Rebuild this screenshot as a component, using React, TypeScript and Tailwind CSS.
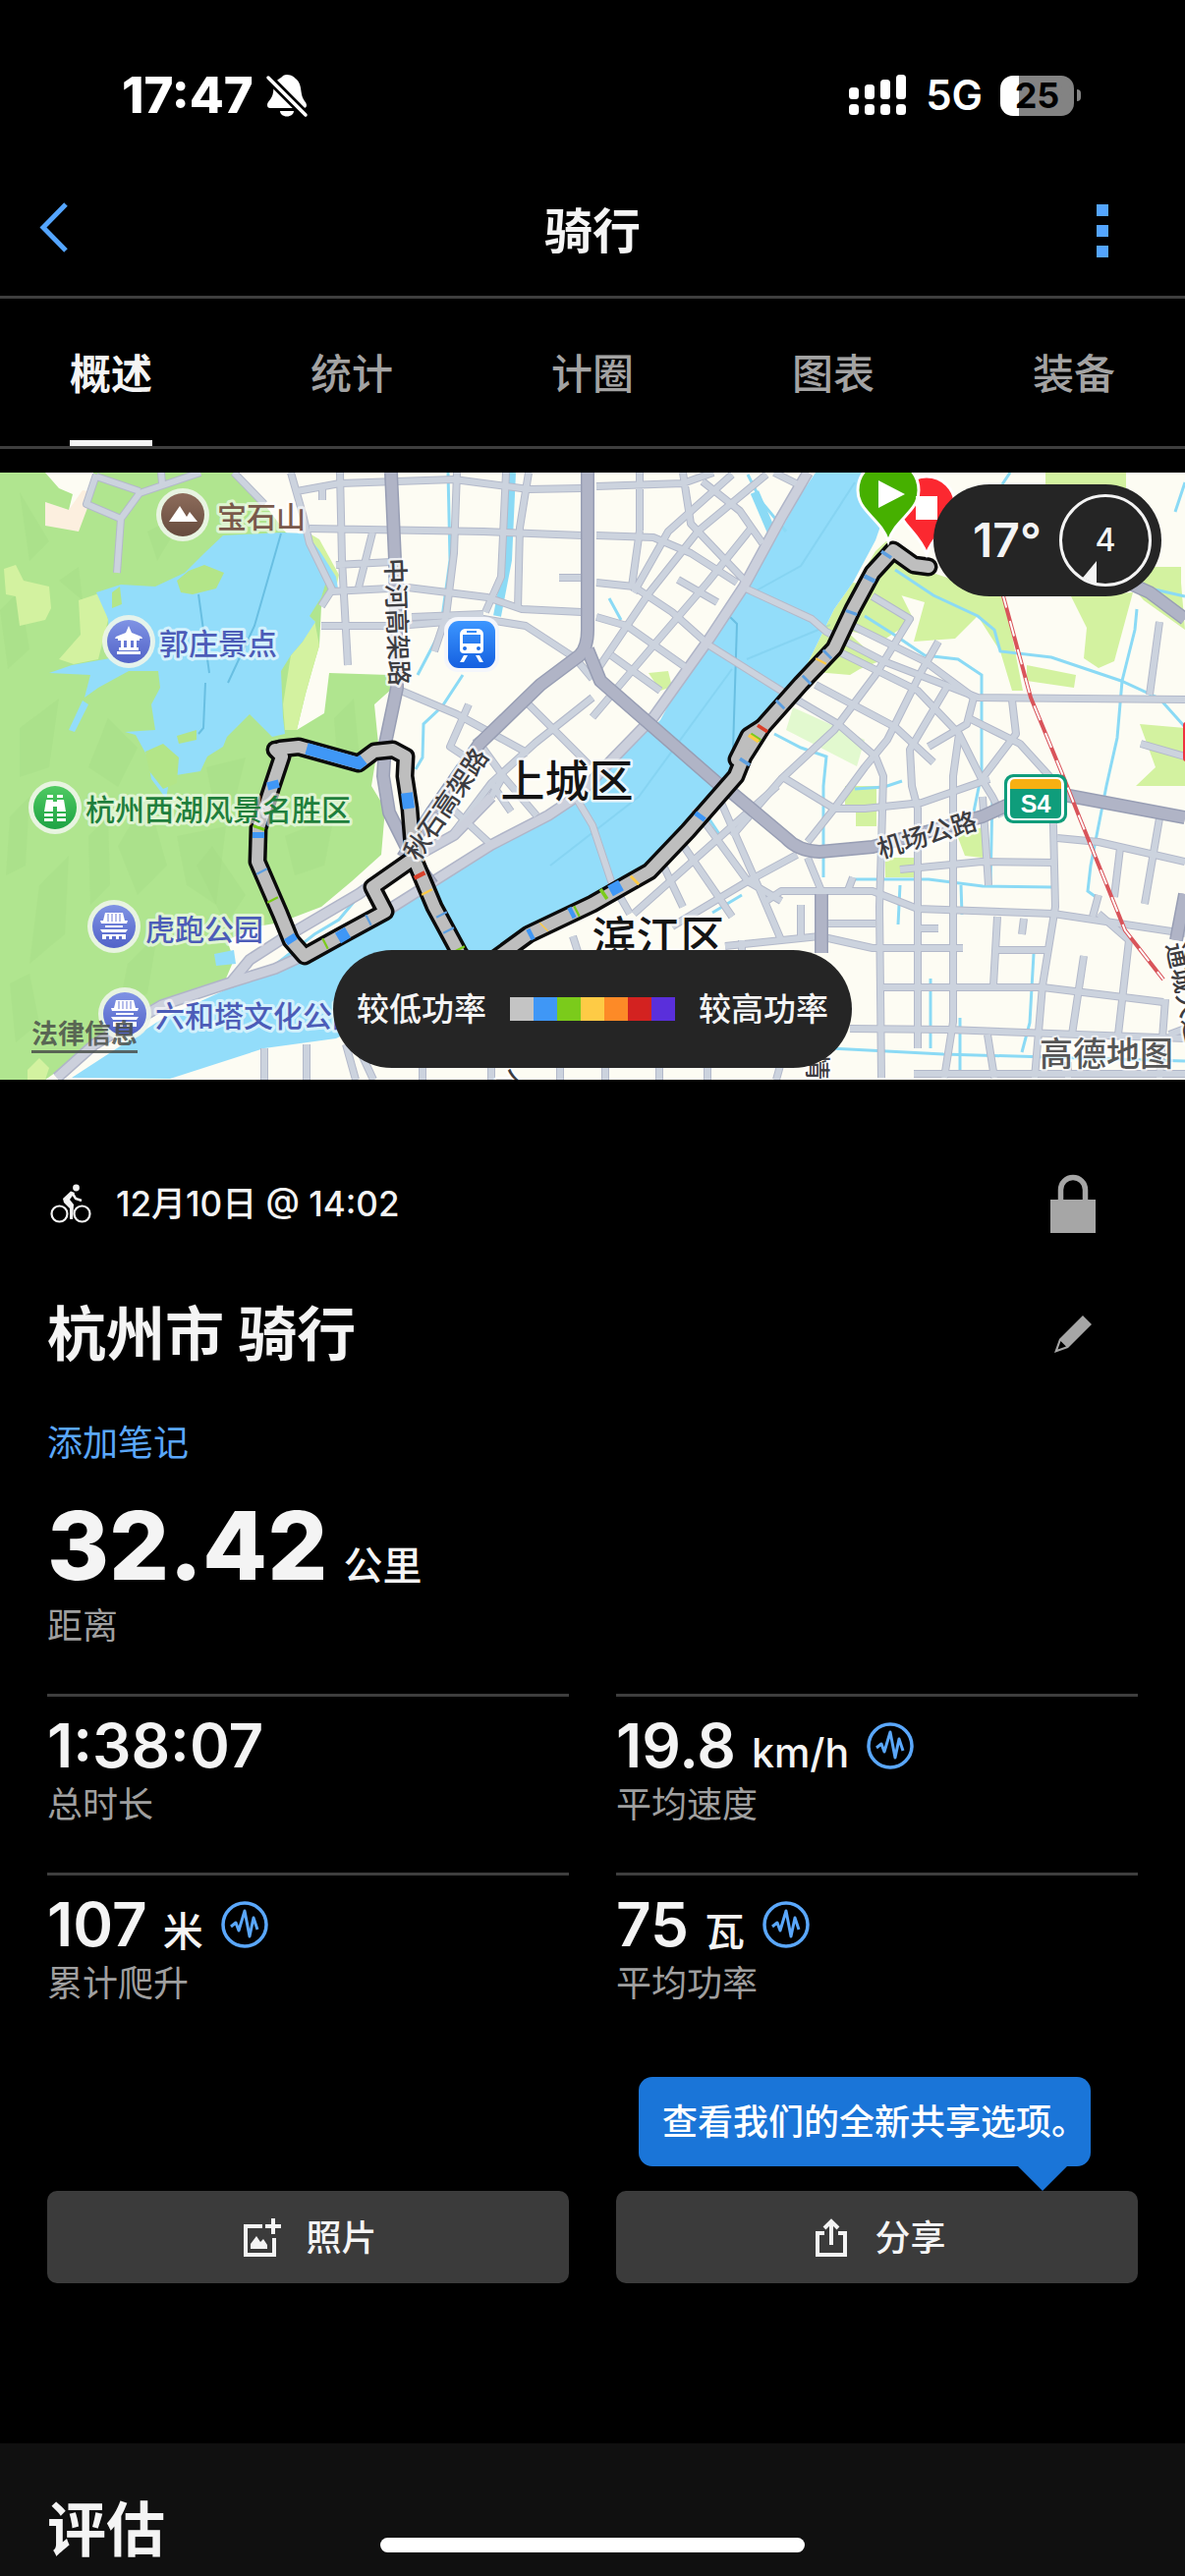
import React from 'react';

const FONT = "font-['Inter','Noto_Sans_CJK_SC',sans-serif]";

const TABS = ['概述', '统计', '计圈', '图表', '装备'];

const STATS = [
  { value: '1:38:07', unit: '', label: '总时长', chart: false },
  { value: '19.8', unit: 'km/h', label: '平均速度', chart: true },
  { value: '107', unit: '米', label: '累计爬升', chart: true },
  { value: '75', unit: '瓦', label: '平均功率', chart: true },
];

export default function App() {
  return (
    <div className={`relative flex min-h-screen flex-col overflow-hidden bg-black text-[#f4f4f4] ${FONT}`}>
      <StatusBar />

      <header className="flex h-[136px] items-center justify-between border-b-[3px] border-[#3e3e3e] px-9">
        <button type="button" aria-label="返回" className="flex w-20 items-center">
          <svg width="40" height="60" viewBox="0 0 40 60" fill="none">
            <path d="M31 3 8 26.500 31 50" stroke="#54a5ff" strokeWidth="5" />
          </svg>
        </button>
        <h1 className="pt-[2px] text-[49px] leading-[60px] font-bold">骑行</h1>
        <button type="button" aria-label="更多" className="flex w-20 flex-col items-end gap-[9px] pr-[42px]">
          <span className="h-3 w-3 bg-[#54a5ff]" />
          <span className="h-3 w-3 bg-[#54a5ff]" />
          <span className="h-3 w-3 bg-[#54a5ff]" />
        </button>
      </header>

      <nav className="flex h-[153px] justify-between border-b-[3px] border-[#3e3e3e] px-[71px]">
        {TABS.map((tab, idx) => (
          <button
            key={tab}
            type="button"
            className={
              idx === 0
                ? 'border-b-[6px] border-[#f4f4f4] pt-[10px] text-[42px] leading-[48px] font-bold'
                : 'pt-1 text-[42px] leading-[48px] font-medium text-[#a3a3a3]'
            }
          >
            {tab}
          </button>
        ))}
      </nav>

      <div className="relative mt-6">
        <RideMap />
        <a href="#legal" className="absolute bottom-[27px] left-8 border-b-[3px] border-[#4a4f4a]/85 text-[27px] leading-[32px] font-bold text-[#4a4f4a]/85">
          法律信息
        </a>
        <div className="absolute top-3 right-6 flex h-[114px] items-center gap-4 rounded-full bg-[#252525] pr-[8px] pl-[40px]">
          <span className="text-[48px] leading-none font-semibold">17°</span>
          <WindDial />
        </div>
        <div className="absolute bottom-3 left-1/2 flex h-[120px] -translate-x-1/2 items-center gap-6 rounded-full bg-[#252525] px-6 text-[33px] leading-[48px] font-medium whitespace-nowrap">
          <span>较低功率</span>
          <PowerScale />
          <span>较高功率</span>
        </div>
      </div>

      <main className="px-12 pt-24 pb-[163px]">
        <div className="flex h-[60px] items-center justify-between">
          <div className="flex items-center gap-6">
            <BikeIcon />
            <span className="text-[35px] leading-[48px] font-medium">12月10日 @ 14:02</span>
          </div>
          <button type="button" aria-label="隐私" className="flex w-[132px] justify-center">
            <LockIcon />
          </button>
        </div>

        <div className="mt-[67px] flex h-[72px] items-center justify-between">
          <h2 className="text-[60px] leading-[72px] font-bold">杭州市 骑行</h2>
          <button type="button" aria-label="编辑" className="flex w-[132px] justify-center">
            <PencilIcon />
          </button>
        </div>

        <button type="button" className="mt-[51px] block text-[36px] leading-[48px] text-[#5aa7fb]">添加笔记</button>

        <div className="mt-8 flex h-24 items-baseline gap-4">
          <span className="text-[96px] leading-[96px] font-extrabold">32.42</span>
          <span className="text-[40px] leading-[48px] font-medium">公里</span>
        </div>
        <p className="mt-[10px] text-[36px] leading-[48px] text-[#9f9f9f]">距离</p>

        <div className="mt-[45px] grid grid-cols-2 gap-x-12">
          {STATS.map(stat => (
            <Stat key={stat.label} {...stat} />
          ))}
        </div>

        <div className="mt-[142px] grid grid-cols-2 gap-x-12">
          <ActionButton label="照片" icon={<PhotoIcon />} />
          <div className="relative">
            <div className="absolute right-12 bottom-[119px] rounded-[14px] bg-[#1a75d8] pt-[22px] pb-5 pr-1 pl-6 text-[36px] leading-[49px] font-medium whitespace-nowrap text-white">
              查看我们的全新共享选项。
              <svg className="absolute top-full right-6" width="50" height="25" viewBox="0 0 50 25">
                <path d="M0 0h50L25 25z" fill="#1a75d8" />
              </svg>
            </div>
            <ActionButton label="分享" icon={<ShareIcon />} />
          </div>
        </div>
      </main>

      <section className="flex-1 bg-[#101010] px-12 pt-[52px]">
        <h2 className="text-[60px] leading-[72px] font-bold">评估</h2>
      </section>

      <div className="absolute bottom-6 left-1/2 h-[15px] w-[432px] -translate-x-1/2 rounded-full bg-white" />
    </div>
  );
}

// ─── Page parts ───────────────────────────────────────────────────────────────

function StatusBar() {
  return (
    <div className="flex h-[168px] items-start justify-between pt-[72px] pr-[106px] pl-[124px] text-white">
      <div className="flex h-[50px] items-center gap-3">
        <span className="text-[51px] leading-[50px] font-extrabold">17:47</span>
        <svg width="44" height="46" viewBox="0 0 44 46" fill="#fff">
          <path d="M22 2c5 0 8 3 10 5 4 4 4 9 5 15 1 6 5 8 5 11 0 2-1 3-3 3H5c-2 0-3-1-3-3 0-4 5-6 6-13 1-8 2-12 8-15 2-2 3-3 6-3zM15 39h14c0 3-3 5.500-7 5.500S15 42 15 39z" />
          <path d="M3 5 41 43" stroke="#000" strokeWidth="9" />
          <path d="M3 5 41 43" stroke="#fff" strokeWidth="3.500" strokeLinecap="round" />
        </svg>
      </div>
      <div className="flex h-[50px] items-center">
        <svg width="58" height="42" viewBox="0 0 58 42" fill="#fff">
          {[13, 10, 5, 0].map((top, i) => (
            <React.Fragment key={top}>
              <rect x={i * 16} y={top} width="10" height={25 - top} rx="3.500" />
              <rect x={i * 16} y="30" width="10" height="11" rx="3.500" />
            </React.Fragment>
          ))}
        </svg>
        <span className="ml-[20px] text-[42px] leading-[50px] font-semibold">5G</span>
        <div className="ml-[18px] flex h-[41px] w-[75px] items-center justify-center rounded-[13px] bg-linear-to-r from-white from-25% to-[#838383] to-25% text-[36px] leading-[41px] font-bold text-black">
          25
        </div>
        <span className="ml-[3px] h-3 w-1 rounded-r-full bg-[#838383]" />
      </div>
    </div>
  );
}

function Stat({ value, unit, label, chart }: { value: string; unit: string; label: string; chart: boolean }) {
  return (
    <div className="border-t-[3px] border-[#3e3e3e] pt-5 pb-[45px]">
      <div className="flex h-[60px] items-center gap-[18px]">
        <div className="flex items-baseline gap-4">
          <span className="text-[62px] leading-[60px] font-semibold">{value}</span>
          {unit && <span className="text-[41px] leading-[48px] font-medium">{unit}</span>}
        </div>
        {chart && (
          <button type="button" aria-label={`${label}图表`}>
            <svg width="48" height="48" viewBox="0 0 48 48" fill="none" stroke="#5aa7fb">
              <circle cx="24" cy="24" r="22" strokeWidth="3.500" />
              <path d="M10 26 15 22 18 30 24 10 29 36 33 17 37 29" strokeWidth="3" strokeLinejoin="round" />
            </svg>
          </button>
        )}
      </div>
      <p className="mt-[6px] text-[36px] leading-[48px] text-[#9f9f9f]">{label}</p>
    </div>
  );
}

function ActionButton({ label, icon }: { label: string; icon: React.ReactNode }) {
  return (
    <button type="button" className="flex h-[94px] w-full items-center justify-center gap-6 rounded-[10px] bg-[#3b3b3b] pt-[2px] pl-1 text-[36px] leading-[48px] font-medium">
      {icon}
      {label}
    </button>
  );
}

function WindDial() {
  return (
    <div className="relative flex h-[98px] w-[98px] items-center justify-center">
      <svg className="absolute inset-0" width="98" height="98" viewBox="0 0 98 98">
        <circle cx="49" cy="49" r="45.500" fill="none" stroke="#f4f4f4" strokeWidth="3" />
        <path d="M26 87 40 70V94z" fill="#f4f4f4" />
      </svg>
      <span className="text-[32px] leading-none font-medium">4</span>
    </div>
  );
}

function PowerScale() {
  return (
    <div className="flex h-6">
      <span className="w-6 bg-[#c4c4c4]" />
      <span className="w-6 bg-[#3f97f6]" />
      <span className="w-6 bg-[#7bcb1b]" />
      <span className="w-6 bg-[#fecb45]" />
      <span className="w-6 bg-[#fd8a27]" />
      <span className="w-6 bg-[#d32220]" />
      <span className="w-6 bg-[#5a2fdb]" />
    </div>
  );
}

// ─── Icons ────────────────────────────────────────────────────────────────────

function BikeIcon() {
  return (
    <svg width="46" height="42" viewBox="0 0 46 42" fill="none" stroke="#f4f4f4">
      <circle cx="12.500" cy="31.500" r="8" strokeWidth="2.200" />
      <circle cx="35.500" cy="31.500" r="8" strokeWidth="2.200" />
      <circle cx="29.500" cy="5" r="3.400" fill="#f4f4f4" stroke="none" />
      <path d="M16 16 24 8.500l4 1.500-5 7 4 5-1 15h-3V26l-6-6z" fill="#f4f4f4" stroke="none" />
      <path d="m26 11 3 5 6 2" strokeWidth="2.500" />
    </svg>
  );
}

function LockIcon() {
  return (
    <svg width="46" height="60" viewBox="0 0 46 60">
      <path d="M10.500 28V16a12.500 12.500 0 0 1 25 0v12" fill="none" stroke="#a6a6a6" strokeWidth="5.500" />
      <path d="M0 26h46v34H0z" fill="#a6a6a6" />
    </svg>
  );
}

function PencilIcon() {
  return (
    <svg width="38" height="38" viewBox="0 0 38 38" fill="#a6a6a6">
      <path d="m29 0 9 9-24 24L0 38l5-14zM6.500 26 3.500 34.500 12 31.500z" fillRule="evenodd" />
    </svg>
  );
}

function PhotoIcon() {
  return (
    <svg width="40" height="40" viewBox="0 0 40 40" fill="none" stroke="#f4f4f4" strokeWidth="4">
      <path d="M20 8H3v29h29V20" />
      <path d="M31 0v16M23 8h16" />
      <path d="M8 31v-5l6-8 4 6 3-3 4 6v4z" fill="#f4f4f4" stroke="none" />
    </svg>
  );
}

function ShareIcon() {
  return (
    <svg width="40" height="40" viewBox="0 0 40 40" fill="none" stroke="#f4f4f4" strokeWidth="4">
      <path d="M13 15H6v22h28V15h-7" />
      <path d="M20 27V4M13 10l7-7 7 7" />
    </svg>
  );
}

// ─── Map ──────────────────────────────────────────────────────────────────────

const HILLS = [
  'M0 0H46L60 16 74 22 70 38 46 30 46 54 80 60 95 20V0H238L269 32 290 60 330 100 342 118 327 136 325 176 318 200 311 225 302 262 330 245 335 204 396 206 400 219 381 236 385 276 378 319 392 342 388 389 358 416 327 442 285 458 262 462 231 476 238 496 227 522 154 542 92 586 46 618H0z',
  'M903 69 949 102 1022 126 1041 222 1030 222 1018 182 995 146 972 169 930 172 941 132 872 112 891 80z',
];

const SHADES = [
  'M20 20 50 70 30 90zM150 60 190 40 160 90zM20 260 60 230 50 300 20 310zM120 380 150 330 170 400 140 430zM40 420 70 390 66 470 30 500z',
  'M180 370 230 360 220 440 190 420zM110 250 140 280 120 320 90 300zM10 350 30 330 26 400 6 410zM290 370 340 350 330 400 300 410z',
  'M0 140 20 120 30 180 8 200zM60 110 80 96 84 130zM130 500 160 470 150 530 120 550zM200 400 216 380 250 430 230 460zM210 300 250 290 240 330 220 350zM10 520 30 510 40 560 16 580zM90 370 110 350 112 420 92 440zM340 250 360 230 366 290 344 300z',
];

const MEADOWS = [
  'M4 98 16 94 24 110 50 116 52 138 46 150 20 156 16 126 6 124z',
  'M320 150 325 176 318 200 311 225 302 262 290 262 288 236 296 186 308 172z',
  'M80 130 104 122 110 150 100 190 75 195 60 190 82 165z',
  'M315 62 325 68 345 104 342 118 330 100z',
  'M868 112 915 120 930 150 900 170 860 160 895 192 875 200 865 206 818 202 849 139z',
  'M1090 126 1153 122 1134 192 1118 199 1103 189 1106 158z',
  'M1045 196 1095 206 1093 219 1045 212z',
  'M1064 0H1146V20L1128 28 1064 20z',
  'M1134 96H1202V112L1206 160 1164 130z',
  'M660 204 680 202 684 218 672 222z',
  'M1160 256 1206 260V319H1156L1176 300z',
  'M860 319H892V360H871V342L860 338z',
  'M974 369 1003 360 1000 392 982 390z',
  'M901 392H930V412H901z',
  'M28 608 40 596 50 606 46 618H28z',
];

const WATER = [
  'M227 64 286 61 311 62 325 79 342 106 344 118 331 114 327 127 315 146 321 152 308 172 296 186 286 202 288 249 290 266 277 269 254 246 231 269 227 279 211 289 204 304 173 309 169 332 154 312 150 289 138 267 127 264 158 262 154 236 163 219 161 202 131 202 100 219 86 229 92 206 50 204 73 196 112 189 110 149 98 122 123 114 158 116 188 102 208 82z',
  'M73 616 165 556 246 519 296 502 346 479 400 446 454 409 538 362 588 334 626 292 672 252 699 202 730 159 772 99 815 22 830 0H915L891 69 868 112 849 139 818 202 788 249 757 299 745 319 661 396 615 422 603 436 500 486 440 530 342 576 269 586 173 617z',
  'M84 232 90 236 76 264 70 262z',
  'M218 490 238 486 240 500 220 502z',
];

const ISLANDS = [
  'M180 110 192 100 208 94 228 102 220 118 196 124 184 122z',
  'M114 122 122 116 124 134 114 138z',
  'M148 284 166 276 182 290 180 316 166 322 152 304z',
  'M180 268 200 262 200 272 182 276z',
];

const CANALS = [
  'M456 0 458 89 448 162 425 206',
  'M471 206 450 238 431 256 430 290 423 302',
  'M761 2 775 30 800 60',
  'M911 99 950 125 995 146 1012 160 1018 182 1070 188 1141 212 1180 230 1206 259',
  'M880 146 910 165 941 186 975 190 999 206 999 306 990 350',
  'M1157 139 1155 160 1142 212 1137 270 1126 319 1110 400 1107 426 1118 434',
  'M788 266 815 280 841 289 838 319V412',
  'M868 414 945 414 1000 421 1072 422',
  'M845 586 960 592 1100 596 1206 599',
  'M978 420 979 450M916 420 914 460M1052 490 1048 560 1040 590',
  'M947 515V586M977 555V612M1010 330 1008 420M1028 0 1020 12M1206 10 1196 40',
  'M870 322 900 320 918 314M1175 119 1206 126M620 128 632 150M720 350 732 368M725 448 755 430',
  'M279 502 320 470 345 455 366 430',
];

const ROADS = [
  'M98 2 88 32 123 47 119 102M123 47 142 21 204 0M98 4 142 19M164 0 165 11M238 0 269 32',
  'M296 0 308 42 315 72 338 119 327 136M302 19 346 11 462 7 538 17 592 16M328 14V28',
  'M315 57 492 60 592 64M346 0 348 89 354 196M379 61 365 117M342 94 398 91',
  'M338 121 415 117 496 127 531 139 592 142M327 156H404L492 149 535 156 581 186M419 147 492 144',
  'M465 0 462 82 454 146 442 182M515 0 510 106 494 142M538 0 529 56 527 139M569 107H600',
  'M408 222 465 246 538 286M477 236 458 279 473 289M538 236 600 298M588 192 603 210M603 229 545 275 500 316 460 369',
  'M446 329 500 379M512 309 546 349M484 270 512 309 500 330M500 316 520 345',
  'M607 14 695 11 726 0M651 0V59M695 0 703 52 757 109M607 64 665 66 703 82 750 112M780 2 711 59 661 122 607 202',
  'M715 9 753 39 776 72M607 112 645 116 684 142 722 176M765 56 720 112 665 176 603 249M730 132 690 109',
  'M607 147 638 156 699 199M622 186 672 222M745 2 680 60 645 122M788 0 812 12M651 59 643 116',
  'M757 117 826 149 841 162 899 192 995 229 1206 231M722 176 795 222 853 256 891 289',
  'M888 126 926 149 891 206 849 262 795 312 745 370M868 156 941 192 991 229',
  'M853 182 934 222 976 266 999 312 1010 330 1020 350M830 216 911 259 950 295M955 172 938 202 903 272 880 300 849 342',
  'M965 216 926 282 928 319 934 342V586M991 229 984 256 945 279M1030 232 1034 266 999 312',
  'M984 249 1038 276 1068 309 1072 359M1180 152 1170 226M1161 276 1206 289',
  'M891 289 899 309 897 380 895 442 897 616M976 266 970 309V559L961 616M1072 359 1074 442 1061 522 1053 616',
  'M1015 452 1011 522M1103 492 1091 572M1118 449 1149 476 1138 572M1186 536 1180 616M1140 382 1134 432M1180 352 1165 439',
  'M780 436 795 426H888L934 444 1072 449 1206 469M738 482 834 472 888 484H980M899 524H1061L1184 539M865 566 965 567 1206 576',
  'M916 404 999 396 1074 397M1076 372 1118 376 1206 396M841 459H891M1015 486H1065M934 464H955M930 612H1206',
  'M795 309 849 342 880 342 938 336 1007 312M734 336 772 422 795 476M707 342 761 416 795 436M791 319 700 400 645 449',
  'M849 342 822 376M822 392 836 426M811 389 761 416 684 462M676 402 695 442M695 379 745 452M1000 330 1006 420',
  'M588 334 603 359 622 416 641 449M583 472 592 500M755 476V489M815 440V475M862 428 868 412M1042 454 1040 470M1118 430 1112 452',
  'M269 586V618M312 582V618M352 582 362 618M360 575 380 618M616 600V618M671 600V618M720 600V618M795 600 790 618M570 600V618M430 600V618M500 600V618M1005 572 1012 616M1087 600V616M1190 572 1206 566',
];

const MAIN_ROADS = [
  'M58 616 96 582 165 542 235 519 254 496 285 476 365 429 408 399 462 369 500 330',
  'M235 519 280 505 345 475 400 442 500 379 558 349 588 329 626 289 665 249 722 169 757 116 795 46 822 0',
];

const HIGHWAYS = [
  'M398 0 402 89 404 219 392 276 390 309 396 346 419 392 440 420',
  'M598 0V160Q598 178 590 186L550 216 488 276 440 345 410 392',
  'M598 180 611 212 730 316 745 326 800 372Q812 385 834 386L888 381 1000 350 1050 327 1088 329 1206 351',
  'M836 429V489M1206 429 1197 476M1148 112 1170 122 1206 149',
];

const ROUTE = [
  'M285 281 304 279 365 296 381 284 400 282 413 289 412 309 417 342 421 392 442 442 469 492 490 505 538 470 603 439 638 419 661 406 700 365 749 309 757 289 776 259 815 215 849 179 868 139 888 102 909 79 930 94 945 96',
  'M280 282 287 289 277 319 263 362 262 396 285 449 296 476 310 492 346 472 392 447 379 422 419 394',
  'M750 292 762 268 776 259',
];

// stretches of the route ridden above the lowest power zone
const POWER = [
  { d: 'M312 281 365 296 370 292', color: '#3f97f6' },
  { d: 'M277 314 279 322M414 326 416 342M621 426 632 420M294 472 298 478', color: '#3f97f6' },
  { d: 'M263 366V372M344 474 354 468M580 449 584 447M711 352 714 348M538 471 542 469', color: '#3f97f6' },
  { d: 'M884 110 886 106M901 85 903 82M866 144 867 141M820 212 822 210M793 237 795 235M757 296 759 293M449 449 450 451M456 465 457 467M266 405 267 407M374 456 376 455M841 186 843 184', color: '#5d9fe0' },
  { d: 'M264 360 263 363M277 434 278 436M330 480 332 479M586 447 588 446M467 484 468 486M613 430 616 428M770 268 768 271', color: '#7bcb1b' },
  { d: 'M645 416 647 414M835 193 836 191M766 272 768 269M553 463 554 462M434 426 435 428', color: '#fecb45' },
  { d: 'M775 262 777 259M426 408 428 412', color: '#d9402a' },
];

function RideMap() {
  return (
    <svg className="block w-full" viewBox="0 0 1206 618" role="img" aria-label="骑行路线">
      <defs>
        <linearGradient id="poi-blue" x1="0" y1="0" x2="0" y2="1">
          <stop offset="0" stopColor="#7f93e4" />
          <stop offset="1" stopColor="#5263c8" />
        </linearGradient>
        <linearGradient id="poi-green" x1="0" y1="0" x2="0" y2="1">
          <stop offset="0" stopColor="#4fca62" />
          <stop offset="1" stopColor="#1ea344" />
        </linearGradient>
        <linearGradient id="poi-brown" x1="0" y1="0" x2="0" y2="1">
          <stop offset="0" stopColor="#8d6c5b" />
          <stop offset="1" stopColor="#664b3e" />
        </linearGradient>
        <linearGradient id="poi-train" x1="0" y1="0" x2="0" y2="1">
          <stop offset="0" stopColor="#3c96ff" />
          <stop offset="1" stopColor="#1560e0" />
        </linearGradient>
      </defs>

      <rect width="1206" height="618" fill="#fdfcf3" />
      <path d="M46 30 70 38 84 18 95 20 80 70 46 54z" fill="#fcefdf" />
      <path d="M807 239 880 272 872 299 800 262z" fill="#e2f9cf" />
      {HILLS.map((d, i) => <path key={d} d={d} fill={i === 0 ? '#b0e58f' : '#d3f2a0'} />)}
      {SHADES.map(d => <path key={d} d={d} fill="#a3db83" opacity="0.35" />)}
      {MEADOWS.map(d => <path key={d} d={d} fill="#d3f2a0" />)}
      {WATER.map(d => <path key={d} d={d} fill="#93ddfa" />)}
      {ISLANDS.map(d => <path key={d} d={d} fill="#b3e588" />)}

      <g fill="none" stroke="#8bdaf5" strokeWidth="3">
        {CANALS.map(d => <path key={d} d={d} />)}
        <path d="M521 0 517 89 506 146" strokeWidth="8" />
        <path d="M768 20 786 62" strokeWidth="9" />
      </g>
      <g fill="none" stroke="#69bfe2" strokeWidth="2">
        <path d="M286 62 259 156 232 214M202 124 213 204M209 214 207 260 202 266" />
        <path d="M742 146 750 154 746 282" />
        <path d="M870 10 815 95 770 120M845 155 760 190M745 200 650 330 560 400" opacity="0.3" />
      </g>

      <g fill="none" strokeLinejoin="round">
        <g stroke="#b3b9ca" strokeWidth="8">{ROADS.map(d => <path key={d} d={d} />)}</g>
        <g stroke="#b0b5c8" strokeWidth="12">{MAIN_ROADS.map(d => <path key={d} d={d} />)}</g>
        <g stroke="#ccd3de" strokeWidth="6">{ROADS.map(d => <path key={d} d={d} />)}</g>
        <g stroke="#ccd0dc" strokeWidth="9">{MAIN_ROADS.map(d => <path key={d} d={d} />)}</g>
        <g stroke="#989eb4" strokeWidth="14">{HIGHWAYS.map(d => <path key={d} d={d} />)}</g>
        <g stroke="#b0b4c6" strokeWidth="11">{HIGHWAYS.map(d => <path key={d} d={d} />)}</g>
        <path d="M1020 122 1049 229 1082 309 1099 352 1145 466 1184 516" stroke="#d9545a" strokeWidth="4" />
        <path d="M1020 122 1049 229 1082 309 1099 352 1145 466 1184 516" stroke="#fff" strokeWidth="2" strokeDasharray="16 14" />
      </g>
      <rect x="1204" y="254" width="6" height="40" rx="3" fill="#ef3340" />

      <g fill="none" strokeLinejoin="round" strokeLinecap="round">
        {ROUTE.map(d => <path key={d} d={d} stroke="#0b0b0b" strokeWidth="19" />)}
        {ROUTE.map(d => <path key={d} d={d} stroke="#bebebe" strokeWidth="12" />)}
      </g>
      <g fill="none" strokeWidth="12">
        {POWER.map(p => <path key={p.d} d={p.d} stroke={p.color} />)}
      </g>

      {/* Start and finish pins */}
      <g stroke="#fff" strokeWidth="3">
        <path d="M943 83C935 60 914 52 914 33a29 29 0 0 1 58 0C972 52 951 60 943 83z" fill="#fb2830" />
        <path d="M904 70C896 46 873 40 873 18a31 31 0 0 1 62 0C935 40 912 46 904 70z" fill="#46b000" />
      </g>
      <path d="M932 24h22v24h-22z" fill="#fff" />
      <path d="M894 8v28l27-14z" fill="#fff" />

      <Poi x={186} y={43} fill="url(#poi-brown)">
        <path d="M-14 7-3-9 4 2 7-3 15 7z" />
      </Poi>
      <Poi x={131} y={172} fill="url(#poi-blue)">
        <Pavilion />
      </Poi>
      <Poi x={56} y={341} fill="url(#poi-green)">
        <path d="M-8-13h6v3h-6zM8-13H2v3h6zM-9-8h7v12H-11zM9-8H2V4H11zM-2-6h4v5h-4zM-11 6h9v3h-9zM2 6h9v3H2zM-11 11h9v3h-9zM2 11h9v3H2z" />
      </Poi>
      <Poi x={116} y={462} fill="url(#poi-blue)">
        <Tower />
      </Poi>
      <Poi x={127} y={551} fill="url(#poi-blue)">
        <Tower />
      </Poi>

      <rect x="452" y="147" width="56" height="56" rx="14" fill="#f4f6fb" />
      <rect x="456" y="151" width="48" height="48" rx="11" fill="url(#poi-train)" />
      <g transform="translate(480 175)" fill="#fff">
        <path d="M-7-16H7q5 1 5 6V5q0 4-4 4H-8q-4 0-4-4V-10q0-5 5-6zM-9-10V-1H9V-10zM-5-14h10v2H-5z" fillRule="evenodd" />
        <circle cx="-7" cy="4" r="2" fill="#1f6ee8" />
        <circle cx="7" cy="4" r="2" fill="#1f6ee8" />
        <path d="M-8 11h4l-4 7h-4zM8 11H4l4 7h4z" />
      </g>

      <g className="font-['Noto_Sans_CJK_SC',sans-serif]" dominantBaseline="central" paintOrder="stroke" strokeLinejoin="round">
        <g fontSize="30" fontWeight="500" stroke="#ffffff" strokeOpacity="0.6" strokeWidth="6">
          <text x="221" y="43" fill="#7a594b">宝石山</text>
          <text x="162" y="172" fill="#4c5cb8">郭庄景点</text>
          <text x="87" y="341" fill="#1f7f3c">杭州西湖风景名胜区</text>
          <text x="148" y="463" fill="#4c5cb8">虎跑公园</text>
          <text x="158" y="551" fill="#4c5cb8">六和塔文化公园</text>
        </g>
        <g fontSize="26" fontWeight="500" fill="#3c3c40" stroke="#ffffff" strokeOpacity="0.8" strokeWidth="5">
          <text transform="translate(404 87) rotate(88)">中河高架路</text>
          <text transform="translate(416 390) rotate(-56)">秋石高架路</text>
          <text transform="translate(893 382) rotate(-17)">机场公路</text>
          <text transform="translate(1198 478) rotate(78)">通城大道</text>
          <text transform="translate(833 592) rotate(90)">情</text>
          <text transform="translate(518 606) rotate(90)">个</text>
        </g>
        <g fill="#141414" fontWeight="500" stroke="#ffffff" strokeOpacity="0.8" strokeWidth="5" textAnchor="middle">
          <text x="577" y="311" fontSize="45">上城区</text>
          <text x="670" y="470" fontSize="45">滨江区</text>
        </g>
        <text x="1058" y="589" fontSize="34" fontWeight="500" fill="#565656" stroke="#ffffff" strokeOpacity="0.7" strokeWidth="4">高德地图</text>
      </g>

      <g>
        <rect x="1022" y="307" width="64" height="50" rx="9" fill="#0f9d7b" />
        <rect x="1025" y="310" width="58" height="44" rx="7" fill="#fff" />
        <path d="M1028 322v-5q0-5 5-5h42q5 0 5 5v5z" fill="#f8b012" />
        <path d="M1028 322h52v25q0 5-5 5h-42q-5 0-5-5z" fill="#0f9d7b" />
        <text x="1054" y="346" className="font-['Liberation_Sans_Narrow','Liberation_Sans',sans-serif]" fontSize="25" fontWeight="700" fill="#fff" textAnchor="middle">S4</text>
      </g>
    </svg>
  );
}

function Poi({ x, y, fill, children }: { x: number; y: number; fill: string; children: React.ReactNode }) {
  return (
    <g transform={`translate(${x} ${y})`}>
      <circle r="27" fill="#eef5ea" opacity="0.9" />
      <circle r="22" fill={fill} />
      <g fill="#fff">{children}</g>
    </g>
  );
}

function Pavilion() {
  return (
    <path d="M0-16 3-9 13-5 14-3H11V-1H8V6H10V9H-10V6H-8V-1H-11V-3H-14L-13-5-3-9zM-5-1V6H-2V-1zM2-1V6H5V-1zM-12 10H12V13H-12z" fillRule="evenodd" />
  );
}

function Tower() {
  return (
    <g>
      <path d="M-9-14H9L11-6H14L13-3H-13L-14-6H-11zM-9-1H9V1H-9zM-14 3H14L12 6H-12zM-12 8H12V13H8V10H5V13H2V10H-2V13H-5V10H-8V13H-12z" />
      <path d="M-6-13V-5M-2-13V-5M2-13V-5M6-13V-5" stroke="#6a7ad6" strokeWidth="1" />
    </g>
  );
}
